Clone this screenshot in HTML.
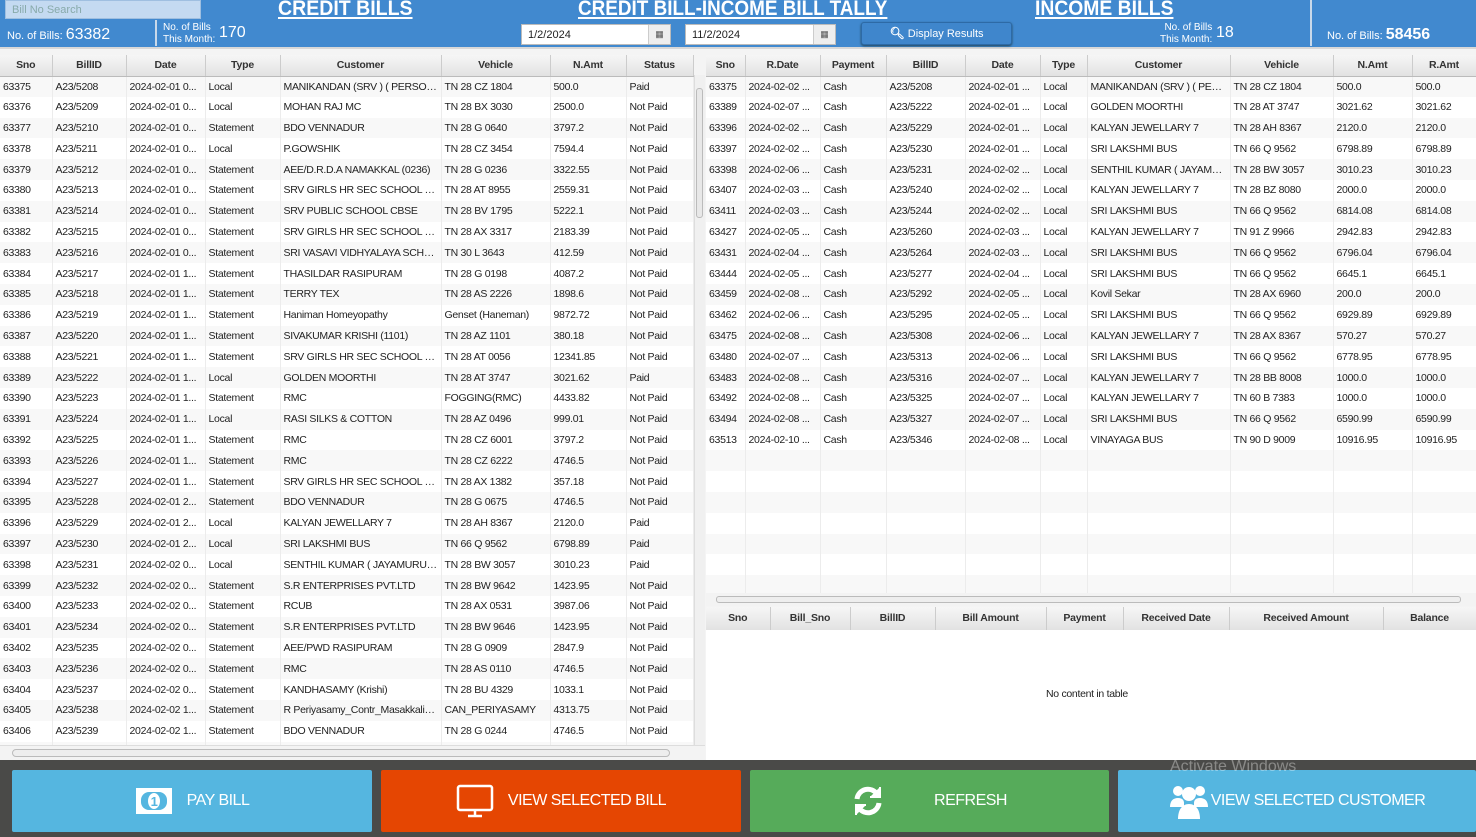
<!DOCTYPE html>
<html><head><meta charset="utf-8"><style>
*{box-sizing:border-box;margin:0;padding:0}
body{width:1476px;height:837px;overflow:hidden;background:#f4f4f4;font-family:"Liberation Sans Narrow","Liberation Sans",sans-serif;font-size:11px;color:#222;position:relative}
.hdr{position:absolute;left:0;top:0;width:1476px;height:49px;background:#4189cf;border-bottom:2px solid #d8d8d8}
.t{position:absolute;color:#fff;font-family:"Liberation Sans",sans-serif;font-weight:bold;font-size:21px;text-decoration:underline;top:-3px;transform-origin:left top;white-space:nowrap}
.w{position:absolute;color:#fff}
.search{position:absolute;left:5px;top:0;width:196px;height:19px;background:#c4daf1;border:1px solid #9fbfe0;color:#8aa;font-size:11px;padding:3px 6px}
.date{position:absolute;top:24px;height:21px;background:#fff;border:1px solid #bbb;font-size:11px;padding:4px 6px}
.date b{position:absolute;right:0;top:0;width:22px;height:19px;background:#eee;border-left:1px solid #ccc;text-align:center;font-weight:normal;font-size:9px;line-height:19px;color:#555}
table{border-collapse:collapse;table-layout:fixed;position:absolute;background:#fff}
th{height:21px;background:linear-gradient(#f6f6f6,#e2e2e2);border-right:1px solid #ccc;border-bottom:1px solid #bbb;font-weight:bold;font-size:10.5px;color:#333;letter-spacing:-0.2px}
td{height:20.8px;border-right:1px solid #ececec;padding:0 3px;white-space:nowrap;overflow:hidden;text-overflow:ellipsis;font-size:10.5px;letter-spacing:-0.3px}
tr:nth-child(even) td{background:#f8f8f8}
.bar{position:absolute;left:0;top:760px;width:1476px;height:77px;background:#4a4a48}
.btn{position:absolute;top:770px;height:62px;color:#fff;font-size:16px;display:flex;align-items:center;justify-content:center;gap:14px;border-radius:2px;letter-spacing:-0.5px}
</style></head><body>
<div class="hdr">
<div class="search">Bill No Search</div>
<div class="w" style="left:7px;top:26px;font-size:11px">No. of Bills: <span style="font-size:16px">63382</span></div>
<div style="position:absolute;left:155px;top:20px;width:2px;height:26px;background:#c9d9ea"></div>
<div class="w" style="left:163px;top:22px;font-size:10px;line-height:12px">No. of Bills<br>This Month:</div>
<div class="w" style="left:219px;top:24px;font-size:16px">170</div>
<div class="t" style="left:278px;transform:scaleX(0.93)">CREDIT BILLS</div>
<div class="t" style="left:578px;transform:scaleX(0.9)">CREDIT BILL-INCOME BILL TALLY</div>
<div class="t" style="left:1035px;transform:scaleX(0.92)">INCOME BILLS</div>
<div class="date" style="left:521px;width:150px">1/2/2024<b>▦</b></div>
<div class="date" style="left:685px;width:151px">11/2/2024<b>▦</b></div>
<div style="position:absolute;left:861px;top:22px;width:151px;height:23px;background:#3f86cc;border:1px solid #2d6aa6;border-radius:3px;box-shadow:0 1px 2px #245;color:#fff;text-align:center;line-height:21px;font-size:11px"><b style="font-size:12px">&#x1F50D;&#xFE0E;</b> Display Results</div>
<div class="w" style="left:1160px;top:22px;font-size:10px;line-height:12px;text-align:right">No. of Bills<br>This Month:</div>
<div class="w" style="left:1216px;top:24px;font-size:16px">18</div>
<div style="position:absolute;left:1310px;top:0;width:2px;height:46px;background:#c9d9ea"></div>
<div class="w" style="left:1327px;top:26px;font-size:11px">No. of Bills: <b style="font-size:16px">58456</b></div>
</div>

<table style="left:0;top:55px;width:693px">
<colgroup><col style="width:52px"><col style="width:74px"><col style="width:79px"><col style="width:75px"><col style="width:161px"><col style="width:109px"><col style="width:76px"><col style="width:67px"></colgroup>
<tr><th>Sno</th><th>BillID</th><th>Date</th><th>Type</th><th>Customer</th><th>Vehicle</th><th>N.Amt</th><th>Status</th></tr>
<tr><td>63375</td><td>A23/5208</td><td>2024-02-01 0...</td><td>Local</td><td>MANIKANDAN (SRV ) ( PERSON...</td><td>TN 28 CZ 1804</td><td>500.0</td><td>Paid</td></tr>
<tr><td>63376</td><td>A23/5209</td><td>2024-02-01 0...</td><td>Local</td><td>MOHAN RAJ MC</td><td>TN 28 BX 3030</td><td>2500.0</td><td>Not Paid</td></tr>
<tr><td>63377</td><td>A23/5210</td><td>2024-02-01 0...</td><td>Statement</td><td>BDO VENNADUR</td><td>TN 28 G 0640</td><td>3797.2</td><td>Not Paid</td></tr>
<tr><td>63378</td><td>A23/5211</td><td>2024-02-01 0...</td><td>Local</td><td>P.GOWSHIK</td><td>TN 28 CZ 3454</td><td>7594.4</td><td>Not Paid</td></tr>
<tr><td>63379</td><td>A23/5212</td><td>2024-02-01 0...</td><td>Statement</td><td>AEE/D.R.D.A NAMAKKAL (0236)</td><td>TN 28 G 0236</td><td>3322.55</td><td>Not Paid</td></tr>
<tr><td>63380</td><td>A23/5213</td><td>2024-02-01 0...</td><td>Statement</td><td>SRV GIRLS HR SEC SCHOOL -R...</td><td>TN 28 AT 8955</td><td>2559.31</td><td>Not Paid</td></tr>
<tr><td>63381</td><td>A23/5214</td><td>2024-02-01 0...</td><td>Statement</td><td>SRV PUBLIC SCHOOL CBSE</td><td>TN 28 BV 1795</td><td>5222.1</td><td>Not Paid</td></tr>
<tr><td>63382</td><td>A23/5215</td><td>2024-02-01 0...</td><td>Statement</td><td>SRV GIRLS HR SEC SCHOOL -R...</td><td>TN 28 AX 3317</td><td>2183.39</td><td>Not Paid</td></tr>
<tr><td>63383</td><td>A23/5216</td><td>2024-02-01 0...</td><td>Statement</td><td>SRI VASAVI VIDHYALAYA SCHO...</td><td>TN 30 L 3643</td><td>412.59</td><td>Not Paid</td></tr>
<tr><td>63384</td><td>A23/5217</td><td>2024-02-01 1...</td><td>Statement</td><td>THASILDAR RASIPURAM</td><td>TN 28 G 0198</td><td>4087.2</td><td>Not Paid</td></tr>
<tr><td>63385</td><td>A23/5218</td><td>2024-02-01 1...</td><td>Statement</td><td>TERRY TEX</td><td>TN 28 AS 2226</td><td>1898.6</td><td>Not Paid</td></tr>
<tr><td>63386</td><td>A23/5219</td><td>2024-02-01 1...</td><td>Statement</td><td>Haniman Homeyopathy</td><td>Genset (Haneman)</td><td>9872.72</td><td>Not Paid</td></tr>
<tr><td>63387</td><td>A23/5220</td><td>2024-02-01 1...</td><td>Statement</td><td>SIVAKUMAR KRISHI (1101)</td><td>TN 28 AZ 1101</td><td>380.18</td><td>Not Paid</td></tr>
<tr><td>63388</td><td>A23/5221</td><td>2024-02-01 1...</td><td>Statement</td><td>SRV GIRLS HR SEC SCHOOL -R...</td><td>TN 28 AT 0056</td><td>12341.85</td><td>Not Paid</td></tr>
<tr><td>63389</td><td>A23/5222</td><td>2024-02-01 1...</td><td>Local</td><td>GOLDEN MOORTHI</td><td>TN 28 AT 3747</td><td>3021.62</td><td>Paid</td></tr>
<tr><td>63390</td><td>A23/5223</td><td>2024-02-01 1...</td><td>Statement</td><td>RMC</td><td>FOGGING(RMC)</td><td>4433.82</td><td>Not Paid</td></tr>
<tr><td>63391</td><td>A23/5224</td><td>2024-02-01 1...</td><td>Local</td><td>RASI SILKS &amp; COTTON</td><td>TN 28 AZ 0496</td><td>999.01</td><td>Not Paid</td></tr>
<tr><td>63392</td><td>A23/5225</td><td>2024-02-01 1...</td><td>Statement</td><td>RMC</td><td>TN 28 CZ 6001</td><td>3797.2</td><td>Not Paid</td></tr>
<tr><td>63393</td><td>A23/5226</td><td>2024-02-01 1...</td><td>Statement</td><td>RMC</td><td>TN 28 CZ 6222</td><td>4746.5</td><td>Not Paid</td></tr>
<tr><td>63394</td><td>A23/5227</td><td>2024-02-01 1...</td><td>Statement</td><td>SRV GIRLS HR SEC SCHOOL - P...</td><td>TN 28 AX 1382</td><td>357.18</td><td>Not Paid</td></tr>
<tr><td>63395</td><td>A23/5228</td><td>2024-02-01 2...</td><td>Statement</td><td>BDO VENNADUR</td><td>TN 28 G 0675</td><td>4746.5</td><td>Not Paid</td></tr>
<tr><td>63396</td><td>A23/5229</td><td>2024-02-01 2...</td><td>Local</td><td>KALYAN JEWELLARY 7</td><td>TN 28 AH 8367</td><td>2120.0</td><td>Paid</td></tr>
<tr><td>63397</td><td>A23/5230</td><td>2024-02-01 2...</td><td>Local</td><td>SRI LAKSHMI BUS</td><td>TN 66 Q 9562</td><td>6798.89</td><td>Paid</td></tr>
<tr><td>63398</td><td>A23/5231</td><td>2024-02-02 0...</td><td>Local</td><td>SENTHIL KUMAR ( JAYAMURUG...</td><td>TN 28 BW 3057</td><td>3010.23</td><td>Paid</td></tr>
<tr><td>63399</td><td>A23/5232</td><td>2024-02-02 0...</td><td>Statement</td><td>S.R ENTERPRISES PVT.LTD</td><td>TN 28 BW 9642</td><td>1423.95</td><td>Not Paid</td></tr>
<tr><td>63400</td><td>A23/5233</td><td>2024-02-02 0...</td><td>Statement</td><td>RCUB</td><td>TN 28 AX 0531</td><td>3987.06</td><td>Not Paid</td></tr>
<tr><td>63401</td><td>A23/5234</td><td>2024-02-02 0...</td><td>Statement</td><td>S.R ENTERPRISES PVT.LTD</td><td>TN 28 BW 9646</td><td>1423.95</td><td>Not Paid</td></tr>
<tr><td>63402</td><td>A23/5235</td><td>2024-02-02 0...</td><td>Statement</td><td>AEE/PWD RASIPURAM</td><td>TN 28 G 0909</td><td>2847.9</td><td>Not Paid</td></tr>
<tr><td>63403</td><td>A23/5236</td><td>2024-02-02 0...</td><td>Statement</td><td>RMC</td><td>TN 28 AS 0110</td><td>4746.5</td><td>Not Paid</td></tr>
<tr><td>63404</td><td>A23/5237</td><td>2024-02-02 0...</td><td>Statement</td><td>KANDHASAMY (Krishi)</td><td>TN 28 BU 4329</td><td>1033.1</td><td>Not Paid</td></tr>
<tr><td>63405</td><td>A23/5238</td><td>2024-02-02 1...</td><td>Statement</td><td>R Periyasamy_Contr_Masakkalip...</td><td>CAN_PERIYASAMY</td><td>4313.75</td><td>Not Paid</td></tr>
<tr><td>63406</td><td>A23/5239</td><td>2024-02-02 1...</td><td>Statement</td><td>BDO VENNADUR</td><td>TN 28 G 0244</td><td>4746.5</td><td>Not Paid</td></tr>
<tr><td>63407</td><td>A23/5240</td><td>2024-02-02 1...</td><td>Local</td><td>KALYAN JEWELLARY 7</td><td>TN 28 BZ 8080</td><td>2000.0</td><td>Paid</td></tr>
</table>
<div style="position:absolute;left:0;top:745px;width:705px;height:15px;background:#f3f3f3;border-top:1px solid #ddd"></div>
<div style="position:absolute;left:12px;top:749px;width:658px;height:8px;border:1px solid #bbb;border-radius:4px;background:#eee"></div>
<div style="position:absolute;left:694px;top:75px;width:11px;height:670px;background:#f0f0f0;border-left:1px solid #ddd"></div>
<div style="position:absolute;left:696px;top:88px;width:7px;height:130px;border:1px solid #bbb;border-radius:3px;background:#e8e8e8"></div>

<table style="left:706px;top:55px;width:770px">
<colgroup><col style="width:39px"><col style="width:75px"><col style="width:66px"><col style="width:79px"><col style="width:75px"><col style="width:47px"><col style="width:143px"><col style="width:103px"><col style="width:79px"><col style="width:64px"></colgroup>
<tr><th>Sno</th><th>R.Date</th><th>Payment</th><th>BillID</th><th>Date</th><th>Type</th><th>Customer</th><th>Vehicle</th><th>N.Amt</th><th>R.Amt</th></tr>
<tr><td>63375</td><td>2024-02-02 ...</td><td>Cash</td><td>A23/5208</td><td>2024-02-01 ...</td><td>Local</td><td>MANIKANDAN (SRV ) ( PER...</td><td>TN 28 CZ 1804</td><td>500.0</td><td>500.0</td></tr>
<tr><td>63389</td><td>2024-02-07 ...</td><td>Cash</td><td>A23/5222</td><td>2024-02-01 ...</td><td>Local</td><td>GOLDEN MOORTHI</td><td>TN 28 AT 3747</td><td>3021.62</td><td>3021.62</td></tr>
<tr><td>63396</td><td>2024-02-02 ...</td><td>Cash</td><td>A23/5229</td><td>2024-02-01 ...</td><td>Local</td><td>KALYAN JEWELLARY 7</td><td>TN 28 AH 8367</td><td>2120.0</td><td>2120.0</td></tr>
<tr><td>63397</td><td>2024-02-02 ...</td><td>Cash</td><td>A23/5230</td><td>2024-02-01 ...</td><td>Local</td><td>SRI LAKSHMI BUS</td><td>TN 66 Q 9562</td><td>6798.89</td><td>6798.89</td></tr>
<tr><td>63398</td><td>2024-02-06 ...</td><td>Cash</td><td>A23/5231</td><td>2024-02-02 ...</td><td>Local</td><td>SENTHIL KUMAR ( JAYAMU...</td><td>TN 28 BW 3057</td><td>3010.23</td><td>3010.23</td></tr>
<tr><td>63407</td><td>2024-02-03 ...</td><td>Cash</td><td>A23/5240</td><td>2024-02-02 ...</td><td>Local</td><td>KALYAN JEWELLARY 7</td><td>TN 28 BZ 8080</td><td>2000.0</td><td>2000.0</td></tr>
<tr><td>63411</td><td>2024-02-03 ...</td><td>Cash</td><td>A23/5244</td><td>2024-02-02 ...</td><td>Local</td><td>SRI LAKSHMI BUS</td><td>TN 66 Q 9562</td><td>6814.08</td><td>6814.08</td></tr>
<tr><td>63427</td><td>2024-02-05 ...</td><td>Cash</td><td>A23/5260</td><td>2024-02-03 ...</td><td>Local</td><td>KALYAN JEWELLARY 7</td><td>TN 91 Z 9966</td><td>2942.83</td><td>2942.83</td></tr>
<tr><td>63431</td><td>2024-02-04 ...</td><td>Cash</td><td>A23/5264</td><td>2024-02-03 ...</td><td>Local</td><td>SRI LAKSHMI BUS</td><td>TN 66 Q 9562</td><td>6796.04</td><td>6796.04</td></tr>
<tr><td>63444</td><td>2024-02-05 ...</td><td>Cash</td><td>A23/5277</td><td>2024-02-04 ...</td><td>Local</td><td>SRI LAKSHMI BUS</td><td>TN 66 Q 9562</td><td>6645.1</td><td>6645.1</td></tr>
<tr><td>63459</td><td>2024-02-08 ...</td><td>Cash</td><td>A23/5292</td><td>2024-02-05 ...</td><td>Local</td><td>Kovil Sekar</td><td>TN 28 AX 6960</td><td>200.0</td><td>200.0</td></tr>
<tr><td>63462</td><td>2024-02-06 ...</td><td>Cash</td><td>A23/5295</td><td>2024-02-05 ...</td><td>Local</td><td>SRI LAKSHMI BUS</td><td>TN 66 Q 9562</td><td>6929.89</td><td>6929.89</td></tr>
<tr><td>63475</td><td>2024-02-08 ...</td><td>Cash</td><td>A23/5308</td><td>2024-02-06 ...</td><td>Local</td><td>KALYAN JEWELLARY 7</td><td>TN 28 AX 8367</td><td>570.27</td><td>570.27</td></tr>
<tr><td>63480</td><td>2024-02-07 ...</td><td>Cash</td><td>A23/5313</td><td>2024-02-06 ...</td><td>Local</td><td>SRI LAKSHMI BUS</td><td>TN 66 Q 9562</td><td>6778.95</td><td>6778.95</td></tr>
<tr><td>63483</td><td>2024-02-08 ...</td><td>Cash</td><td>A23/5316</td><td>2024-02-07 ...</td><td>Local</td><td>KALYAN JEWELLARY 7</td><td>TN 28 BB 8008</td><td>1000.0</td><td>1000.0</td></tr>
<tr><td>63492</td><td>2024-02-08 ...</td><td>Cash</td><td>A23/5325</td><td>2024-02-07 ...</td><td>Local</td><td>KALYAN JEWELLARY 7</td><td>TN 60 B 7383</td><td>1000.0</td><td>1000.0</td></tr>
<tr><td>63494</td><td>2024-02-08 ...</td><td>Cash</td><td>A23/5327</td><td>2024-02-07 ...</td><td>Local</td><td>SRI LAKSHMI BUS</td><td>TN 66 Q 9562</td><td>6590.99</td><td>6590.99</td></tr>
<tr><td>63513</td><td>2024-02-10 ...</td><td>Cash</td><td>A23/5346</td><td>2024-02-08 ...</td><td>Local</td><td>VINAYAGA BUS</td><td>TN 90 D 9009</td><td>10916.95</td><td>10916.95</td></tr>
<tr><td></td><td></td><td></td><td></td><td></td><td></td><td></td><td></td><td></td><td></td></tr>
<tr><td></td><td></td><td></td><td></td><td></td><td></td><td></td><td></td><td></td><td></td></tr>
<tr><td></td><td></td><td></td><td></td><td></td><td></td><td></td><td></td><td></td><td></td></tr>
<tr><td></td><td></td><td></td><td></td><td></td><td></td><td></td><td></td><td></td><td></td></tr>
<tr><td></td><td></td><td></td><td></td><td></td><td></td><td></td><td></td><td></td><td></td></tr>
<tr><td></td><td></td><td></td><td></td><td></td><td></td><td></td><td></td><td></td><td></td></tr>
<tr><td></td><td></td><td></td><td></td><td></td><td></td><td></td><td></td><td></td><td></td></tr>
</table>
<div style="position:absolute;left:706px;top:593px;width:770px;height:13px;background:#f3f3f3"></div>
<div style="position:absolute;left:716px;top:596px;width:745px;height:7px;border:1px solid #bbb;border-radius:3px;background:#eee"></div>

<table style="left:706px;top:607px;width:770px">
<colgroup><col style="width:64px"><col style="width:80px"><col style="width:85px"><col style="width:111px"><col style="width:77px"><col style="width:106px"><col style="width:154px"><col style="width:93px"></colgroup>
<tr><th style="height:23px">Sno</th><th>Bill_Sno</th><th>BillID</th><th>Bill Amount</th><th>Payment</th><th>Received Date</th><th>Received Amount</th><th>Balance</th></tr>
</table>
<div style="position:absolute;left:706px;top:630px;width:770px;height:130px;background:#fff"></div>
<div style="position:absolute;left:1046px;top:688px;font-size:10.5px;letter-spacing:-0.3px">No content in table</div>

<div class="bar"></div>
<div class="btn" style="left:12px;width:360px;background:#55b6e0">
<svg width="38" height="28" viewBox="0 0 38 28"><rect x="1" y="1" width="36" height="26" fill="#fff"/><rect x="6" y="5" width="26" height="18" rx="8" fill="#55b6e0"/><ellipse cx="19" cy="14" rx="6" ry="8" fill="#fff"/><text x="19" y="19" font-size="13" font-weight="bold" text-anchor="middle" fill="#55b6e0" font-family="Liberation Sans">1</text></svg>PAY BILL</div>
<div class="btn" style="left:381px;width:360px;background:#e54602">
<svg width="38" height="34" viewBox="0 0 38 34"><rect x="2" y="2" width="34" height="24" rx="2" fill="none" stroke="#fff" stroke-width="2.5"/><path d="M19 26v5M12 32h14" stroke="#fff" stroke-width="2.5"/></svg>VIEW SELECTED BILL</div>
<div class="btn" style="left:750px;width:359px;background:#56ab5a;gap:50px">
<svg width="32" height="32" viewBox="0 0 32 32" fill="none" stroke="#fff" stroke-width="5"><path d="M5 14a11 11 0 0 1 20-5"/><path d="M27 18a11 11 0 0 1-20 5"/><path d="M28 2v10h-10" fill="#fff" stroke-width="2"/><path d="M4 30v-10h10" fill="#fff" stroke-width="2"/></svg>REFRESH</div>
<div class="btn" style="left:1118px;width:358px;background:#55b6e0;gap:2px">
<svg width="40" height="36" viewBox="0 0 40 36" fill="#fff"><circle cx="9" cy="8" r="5"/><circle cx="31" cy="8" r="5"/><circle cx="20" cy="11" r="7"/><path d="M1 24c0-6 3-9 8-9s6 3 6 5v4z"/><path d="M39 24c0-6-3-9-8-9s-6 3-6 5v4z"/><path d="M9 36c0-9 4-15 11-15s11 6 11 15z"/></svg>VIEW SELECTED CUSTOMER</div>
<div style="position:absolute;left:1170px;top:758px;color:rgba(255,255,255,0.35);font-size:16px">Activate Windows</div>
</body></html>
